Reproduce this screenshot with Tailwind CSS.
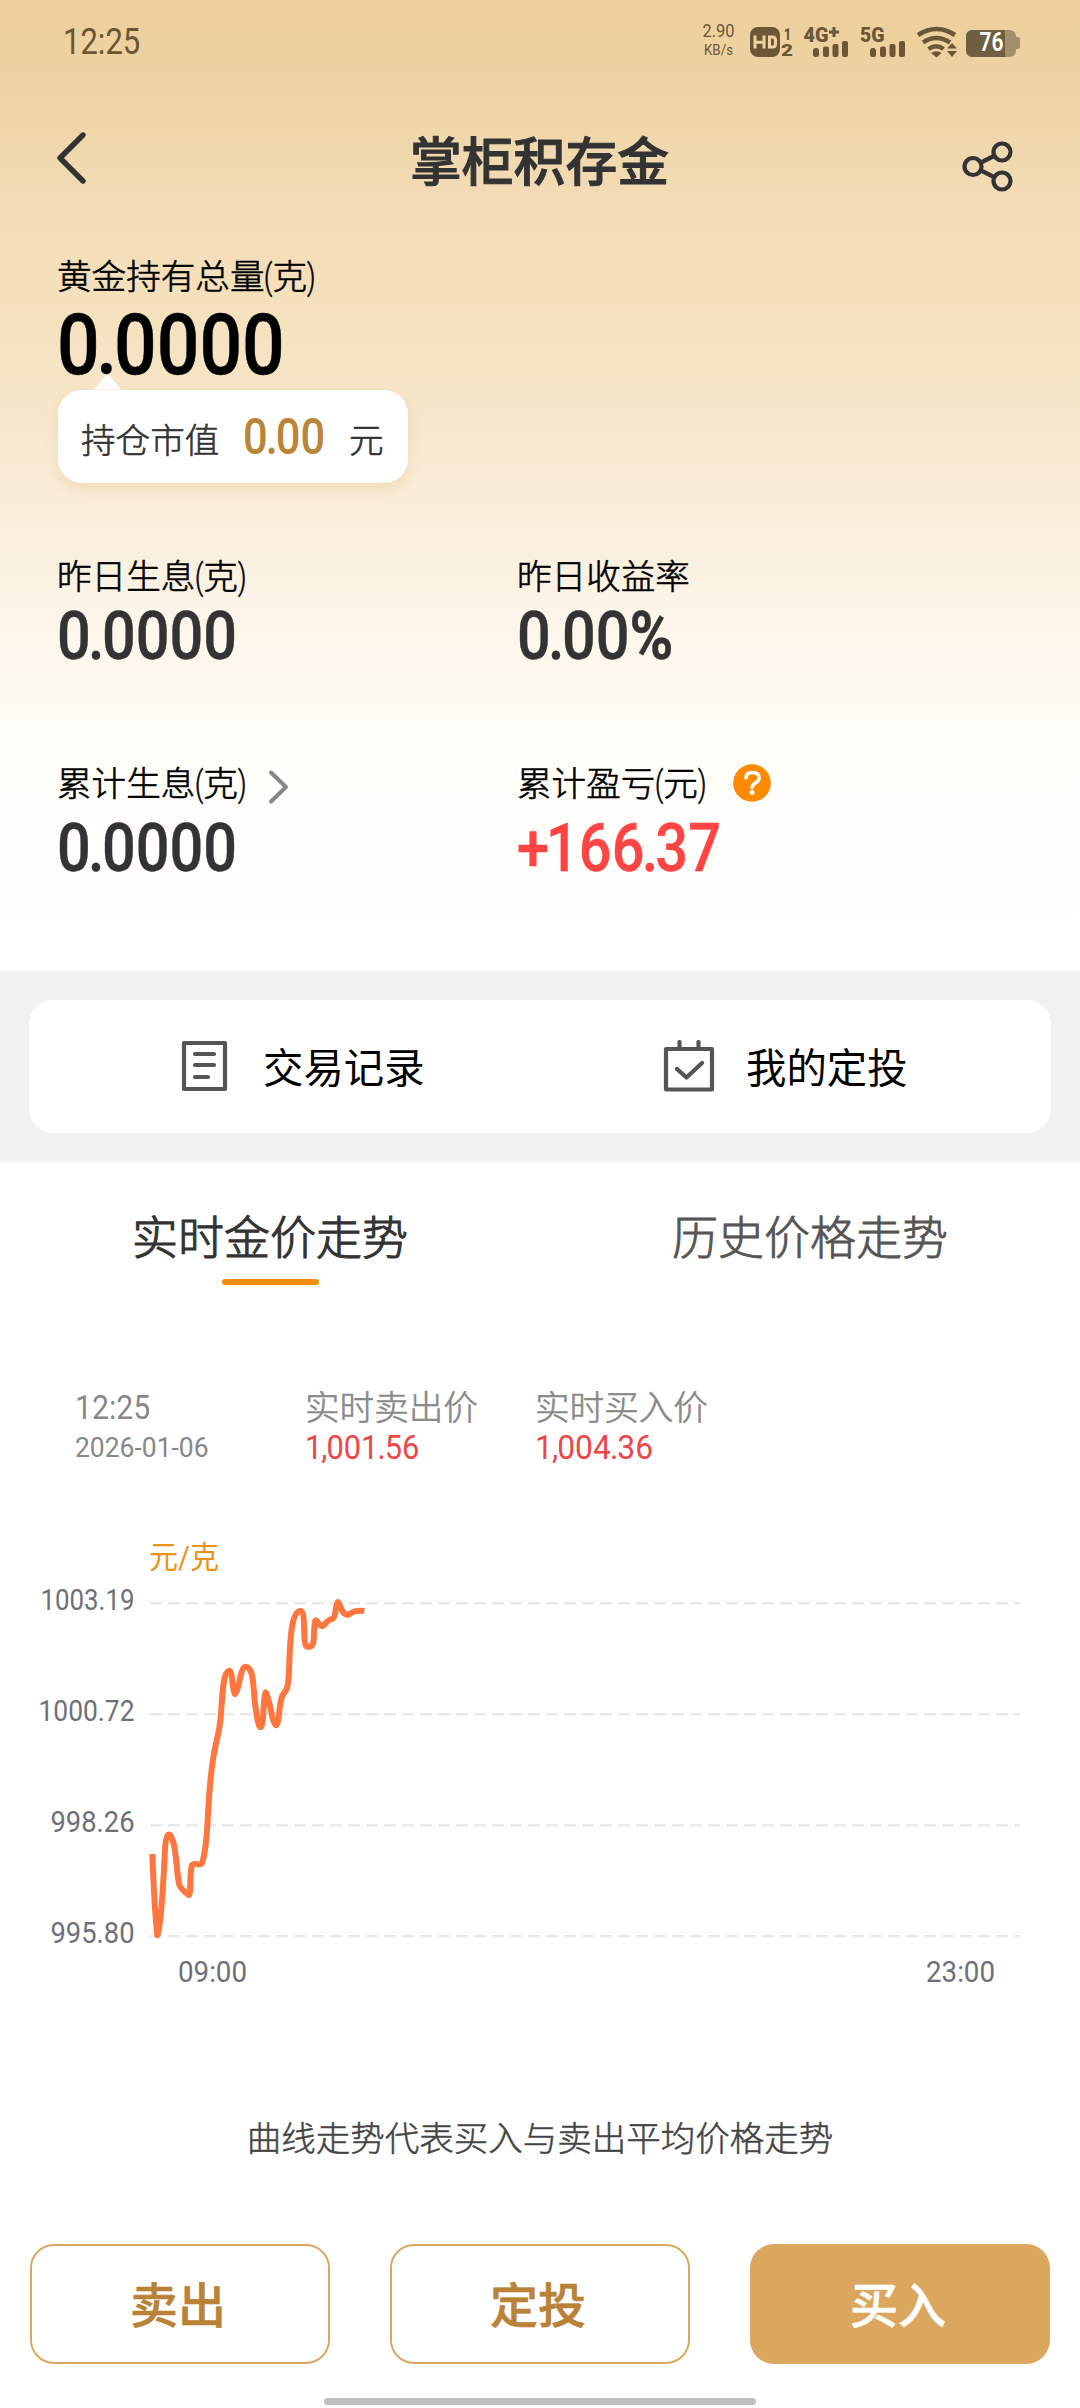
<!DOCTYPE html>
<html lang="zh-CN">
<head>
<meta charset="utf-8">
<title>掌柜积存金</title>
<script src="https://cdn.jsdelivr.net/npm/@tailwindcss/browser@4"></script>
</head>
<body class="bg-white">
<div class="w-[1080px] h-[2408px] flex flex-col overflow-hidden bg-white whitespace-nowrap font-['Roboto','Noto_Sans_CJK_SC',sans-serif]">

  <header class="h-[971px] shrink-0 flex flex-col bg-[linear-gradient(180deg,#edcf9b_0px,#edd2a1_70px,#efd7aa_130px,#f3ddb9_220px,#f4e0ba_290px,#f7e7cb_420px,#faeedb_510px,#fbf1e0_570px,#fdf4e8_600px,#fef8ee_670px,#fffcf5_710px,#fffef9_740px,#fffefc_900px,#ffffff_960px)]">
    <!-- status bar -->
    <div class="h-[82px] shrink-0 flex items-center justify-between pl-[63px] pr-[60px]">
      <span class="mt-[2px] text-[36.500px] leading-none text-[#6b5633] origin-left scale-x-[.85]">12:25</span>
      <svg class="w-[320px] h-[40px] mt-[2px] overflow-visible font-['Roboto']" viewBox="700 22 320 40" fill="#6b5736">
        <text x="702.500" y="37" font-size="18.500" textLength="32" lengthAdjust="spacingAndGlyphs">2.90</text>
        <text x="704" y="55" font-size="15.500" textLength="29" lengthAdjust="spacingAndGlyphs">KB/s</text>
        <rect x="750" y="27" width="30" height="30" rx="8"/>
        <g fill="none" stroke="#eed2a0" stroke-width="3"><path d="M755 35.500v13M764 35.500v13M755 42.300h9M769.500 37h3q3 0 3 3v4q0 3-3 3h-3z"/></g>
        <text x="784" y="39.500" font-size="17" font-weight="900" textLength="7" lengthAdjust="spacingAndGlyphs">1</text>
        <text x="781" y="56" font-size="17" font-weight="900" textLength="12" lengthAdjust="spacingAndGlyphs">2</text>
        <text x="803.500" y="41.500" font-size="21" font-weight="900" textLength="25" lengthAdjust="spacingAndGlyphs">4G</text>
        <path d="M829 30.500h3.500v-3.500h3v3.500h3.500v3h-3.500v3.500h-3v-3.500h-3.500z"/>
        <rect x="813" y="48" width="6" height="9" rx="2.500"/><rect x="823" y="46.500" width="6" height="10.500" rx="2"/><rect x="832.500" y="44" width="6" height="13" rx="2"/><rect x="842" y="41" width="6" height="16" rx="2"/>
        <text x="860" y="41.500" font-size="21" font-weight="900" textLength="24.500" lengthAdjust="spacingAndGlyphs">5G</text>
        <rect x="870" y="48" width="6" height="9" rx="2.500"/><rect x="880" y="46.500" width="6" height="10.500" rx="2"/><rect x="889.500" y="44" width="6" height="13" rx="2"/><rect x="899" y="41" width="6" height="16" rx="2"/>
        <g fill="none" stroke="#6b5736" stroke-width="4.500"><path d="M918 35q18.500-12 37 0M923 42.500q13-9 27 0M928.500 49q8-5.500 15 0"/></g>
        <path d="M931 53q5.500-3.500 10.500 0l-5 4.500zM947 48.500l5-5.500 5 5.500zM947 51l5 6 5-6z"/>
        <path d="M973 30h36q7 0 7 7h2q2 0 2 2v8q0 2-2 2h-2v1q0 7-7 7h-36q-7 0-7-7v-13q0-7 7-7z" fill="#a38f6b"/>
        <path d="M973 30h32v27h-32q-7 0-7-7v-13q0-7 7-7z" fill="#6e5f43"/>
        <text x="979.500" y="51" font-size="25" font-weight="600" fill="#fff" textLength="24" lengthAdjust="spacingAndGlyphs">76</text>
      </svg>
    </div>

    <nav class="h-[152px] shrink-0 flex items-center justify-between pl-[54px] pr-[64px]">
      <svg class="w-[54px] h-[60px]" viewBox="54 128 54 60" fill="none" stroke="#333" stroke-width="5.400" stroke-linecap="round" stroke-linejoin="round"><path d="M83 135L60 158L83 181"/></svg>
      <h1 class="mt-[11px] ml-[9px] text-[51.800px] leading-none font-medium text-[#333] [-webkit-text-stroke:1px_#333]">掌柜积存金</h1>
      <svg class="w-[54px] h-[60px] mt-[17px]" viewBox="962 137 54 60" fill="none" stroke="#333" stroke-width="4.200"><circle cx="973" cy="166.500" r="8.500"/><circle cx="1002" cy="152" r="8.500"/><circle cx="1002" cy="181" r="8.500"/><path d="M981 162.500L994 156M981 170.500L994 177"/></svg>
    </nav>

    <section class="pl-[57px] flex flex-col">
      <div class="mt-[24px] h-[40px] flex items-center text-[34.600px] font-light text-black [-webkit-text-stroke:.6px]">黄金持有总量<span class="origin-left scale-x-75 w-[8px]">(</span>克<span class="origin-left scale-x-75 w-[8px]">)</span></div>
      <div class="mt-[13px] h-[70px] flex items-center text-[84.500px] font-medium text-black origin-left scale-x-[.89] [-webkit-text-stroke:.5px]">0<span class="mx-[-.045em]">.</span>0000</div>
      <div class="relative ml-px mt-[9px] w-[350px] h-[93px] rounded-[24px] bg-white flex items-center pl-[23px] text-[34.600px] font-light text-[#333] shadow-[0_6px_14px_rgba(214,160,80,.22)]">
        <svg class="absolute left-[36px] top-[-15px] w-[27px] h-[15px]" viewBox="0 0 27 15" fill="#fff"><path d="M0 14.500L11 1.500q2.500-2.500 5 0L27 14.500z"/></svg>
        <span class="w-[162px] mt-[11px] [-webkit-text-stroke:.6px]">持仓市值</span>
        <span class="mt-[2px] w-[106px] text-[50.500px] leading-none font-medium text-[#b98539] origin-left scale-x-[.86]">0<span class="mx-[-.045em]">.</span>00</span>
        <span class="mt-[11px] [-webkit-text-stroke:.6px]">元</span>
      </div>

      <div class="mt-[75px] grid grid-cols-[460px_1fr]">
        <div>
          <div class="h-[40px] flex items-center text-[34.600px] font-light text-black [-webkit-text-stroke:.6px]">昨日生息<span class="origin-left scale-x-75 w-[8px]">(</span>克<span class="origin-left scale-x-75 w-[8px]">)</span></div>
          <div class="mt-[8px] h-[60px] flex items-center text-[67.500px] font-medium text-[#333] origin-left scale-x-[.88] [-webkit-text-stroke:.4px]">0<span class="mx-[-.045em]">.</span>0000</div>
        </div>
        <div>
          <div class="h-[40px] flex items-center text-[34.600px] font-light text-black [-webkit-text-stroke:.6px]">昨日收益率</div>
          <div class="mt-[8px] h-[60px] flex items-center text-[67.500px] font-medium text-[#333] origin-left scale-x-[.88] [-webkit-text-stroke:.4px]">0<span class="mx-[-.045em]">.</span>00<span class="font-bold origin-left">%</span></div>
        </div>
      </div>

      <div class="mt-[99px] grid grid-cols-[460px_1fr]">
        <div>
          <div class="h-[40px] flex items-center text-[34.600px] font-light text-black [-webkit-text-stroke:.6px]">累计生息<span class="origin-left scale-x-75 w-[8px]">(</span>克<span class="origin-left scale-x-75 w-[8px]">)</span>
            <svg class="ml-[17px] mt-[4px] w-[30px] h-[40px]" viewBox="0 0 30 40" fill="none" stroke="#888" stroke-width="4" stroke-linecap="round" stroke-linejoin="round"><path d="M8 5.500L23 20L8 34.500"/></svg>
          </div>
          <div class="mt-[13px] h-[60px] flex items-center text-[67.500px] font-medium text-[#333] origin-left scale-x-[.88] [-webkit-text-stroke:.4px]">0<span class="mx-[-.045em]">.</span>0000</div>
        </div>
        <div>
          <div class="h-[40px] flex items-center text-[34.600px] font-light text-black [-webkit-text-stroke:.6px]">累计盈亏<span class="origin-left scale-x-75 w-[8px]">(</span>元<span class="origin-left scale-x-75 w-[8px]">)</span>
            <svg class="ml-[27px] -mt-[4px] w-[38px] h-[40px]" viewBox="0 0 38 40"><circle cx="19" cy="20" r="18.800" fill="#ff8a00"/><path d="M13 15q0-5.500 6.500-5.500t6.500 5.500q0 3-3.500 5t-3.500 4.500" fill="none" stroke="#fff" stroke-width="3.600" stroke-linecap="round"/><circle cx="19" cy="29.500" r="2.500" fill="#fff"/></svg>
          </div>
          <div class="mt-[13px] h-[60px] flex items-center text-[67.500px] font-medium text-[#ff4444] origin-left scale-x-[.855] [-webkit-text-stroke:.4px]"><span class="w-[34px]">+</span>166<span class="mx-[-.045em]">.</span>37</div>
        </div>
      </div>
    </section>
  </header>

  <!-- shortcuts -->
  <section class="h-[191px] shrink-0 bg-[#f1f1f1] px-[29px] pt-[29px]">
    <div class="h-[133px] rounded-[24px] bg-white flex items-center text-[40.400px] font-normal text-black">
      <div class="w-[482px] pl-[152px] flex items-center">
        <svg class="w-[49px] h-[52px]" viewBox="182 1040 49 52" fill="none" stroke="#555" stroke-width="4.200" stroke-linecap="round" stroke-linejoin="round"><rect x="185" y="1043" width="41" height="46"/><path d="M196 1054h19M196 1065h19M196 1077h13"/></svg>
        <span class="ml-[33px] mt-[7px]">交易记录</span>
      </div>
      <div class="pl-[151px] flex items-center">
        <svg class="w-[53px] h-[52px]" viewBox="663 1040 53 52" fill="none" stroke="#555" stroke-width="4.200" stroke-linecap="round" stroke-linejoin="round"><rect x="667" y="1049" width="46" height="40.500"/><path d="M680.500 1042v7M699.500 1042v7M678 1069l9.500 8.500 15.500-14.500"/></svg>
        <span class="ml-[31px] mt-[7px]">我的定投</span>
      </div>
    </div>
  </section>

  <!-- tabs -->
  <div class="h-[128px] shrink-0 grid grid-cols-2 text-[46px] font-light">
    <div class="pt-[46px] flex flex-col items-center text-[#333] [-webkit-text-stroke:1.100px]"><span class="leading-[60px]">实时金价走势</span><span class="mt-[11px] w-[97px] h-[6px] rounded-full bg-[#f58b10]"></span></div>
    <div class="pt-[46px] flex flex-col items-center text-[#555] [-webkit-text-stroke:.8px]"><span class="leading-[60px]">历史价格走势</span></div>
  </div>

  <!-- current quote -->
  <div class="mt-[97px] h-[84px] shrink-0 grid grid-cols-[230px_230px_1fr] pl-[75px] text-[34.600px] text-[#888]">
    <div class="flex flex-col">
      <span class="h-[40px] leading-[40px] text-[34px] origin-left scale-x-[.89]">12:25</span>
      <span class="h-[40px] leading-[41px] text-[28px] origin-left scale-x-[.945]">2026-01-06</span>
    </div>
    <div class="flex flex-col"><span class="h-[40px] leading-[42px] font-light [-webkit-text-stroke:.6px]">实时卖出价</span><span class="h-[40px] leading-[40px] text-[34px] text-[#ee4646] origin-left scale-x-[.905]">1<span class="mx-[-.03em]">,</span>001<span class="mx-[-.03em]">.</span>56</span></div>
    <div class="flex flex-col"><span class="h-[40px] leading-[42px] font-light [-webkit-text-stroke:.6px]">实时买入价</span><span class="h-[40px] leading-[40px] text-[34px] text-[#ee4646] origin-left scale-x-[.935]">1<span class="mx-[-.03em]">,</span>004<span class="mx-[-.03em]">.</span>36</span></div>
  </div>

  <!-- price chart -->
  <svg class="mt-[59px] shrink-0 w-[1080px] h-[470px] font-['Roboto','Noto_Sans_CJK_SC',sans-serif]" viewBox="0 1530 1080 470">
    <text x="149" y="1568" font-size="30.500" fill="#ea9318" textLength="70" lengthAdjust="spacingAndGlyphs">元/克</text>
    <path d="M150 1603.300H1020M150 1714.300H1020M150 1825.300H1020M150 1936.300H1020" stroke="#e9e9ec" stroke-width="2.400" stroke-dasharray="12 6"/>
    <g font-size="30" fill="#6e7079">
      <text x="40.500" y="1609.500" textLength="94" lengthAdjust="spacingAndGlyphs">1003.19</text>
      <text x="38.500" y="1720.500" textLength="96" lengthAdjust="spacingAndGlyphs">1000.72</text>
      <text x="50.500" y="1831.500" textLength="84" lengthAdjust="spacingAndGlyphs">998.26</text>
      <text x="50.500" y="1942.500" textLength="84" lengthAdjust="spacingAndGlyphs">995.80</text>
      <text x="178" y="1981.500" textLength="69" lengthAdjust="spacingAndGlyphs">09:00</text>
      <text x="926" y="1981.500" textLength="69" lengthAdjust="spacingAndGlyphs">23:00</text>
    </g>
    <path transform="translate(120 1580) scale(.33333)" fill="none" stroke="#ff763e" stroke-width="18" stroke-linejoin="round" d="M97 822C100 900 104 1000 112 1066C120 1050 128 950 134 830C136 750 150 750 161 790C170 830 170 880 178 915C184 930 195 935 206 945C214 945 208 880 216 855C225 845 235 860 246 850C256 820 260 780 263 720C267 640 272 570 284 510C292 470 300 450 303 400C308 330 310 275 328 272C340 275 335 335 345 342C358 335 360 262 376 260C405 262 398 330 407 385C412 420 416 440 421 442C434 440 428 345 437 337C448 345 455 430 468 436C480 430 475 370 488 345C495 333 503 335 506 290C510 220 508 90 543 93C560 100 545 200 562 200C590 205 578 160 585 125C590 110 595 140 608 138C618 130 625 118 635 117C650 115 645 70 654 66C662 70 662 105 685 104C700 92 715 90 733 93"/>
  </svg>

  <p class="mt-[118px] h-[40px] shrink-0 leading-[42px] text-center text-[34.500px] font-light text-[#444] [-webkit-text-stroke:.5px]">曲线走势代表买入与卖出平均价格走势</p>

  <!-- actions -->
  <div class="mt-[86px] h-[120px] shrink-0 grid grid-cols-3 gap-[60px] px-[30px] text-[48px] font-medium text-[#b98236] [-webkit-text-stroke:.6px]">
    <button class="rounded-[24px] border-2 border-[#dba75f] pt-[5px] pr-[4px]">卖出</button>
    <button class="rounded-[24px] border-2 border-[#dba75f] pt-[5px] pr-[4px]">定投</button>
    <button class="rounded-[24px] bg-[#dba65e] text-white pt-[5px] pr-[4px]">买入</button>
  </div>
  <div class="mt-[34px] mx-auto w-[432px] h-[7px] shrink-0 rounded-full bg-[#c0c0c0]"></div>
</div>
</body>
</html>
